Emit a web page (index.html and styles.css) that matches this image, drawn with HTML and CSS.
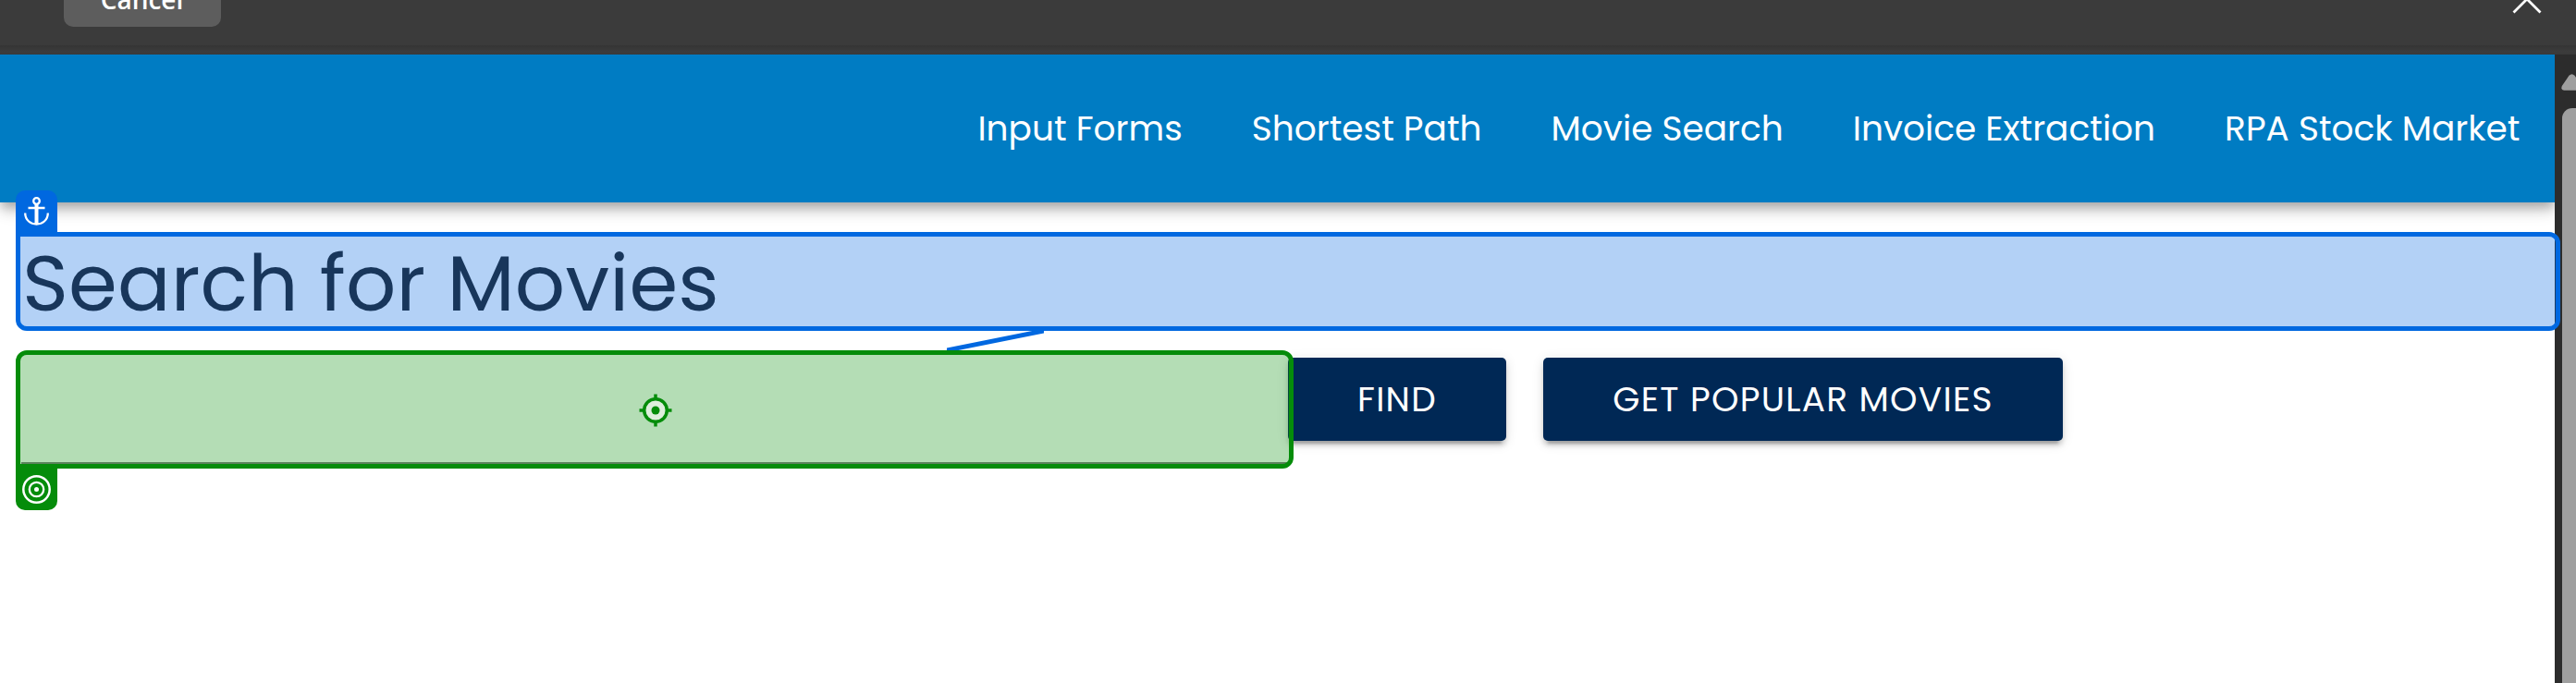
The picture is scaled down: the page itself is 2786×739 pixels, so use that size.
FILE: index.html
```html
<!DOCTYPE html>
<html lang="en">
<head>
<meta charset="utf-8">
<title>Movie Search</title>
<link rel="stylesheet" href="styles.css">
</head>
<body>
<div class="screen">
  <header class="toolbar">
    <button class="cancel">Cancel</button>
    <svg class="close" width="32" height="32" viewBox="0 0 32 32"><path d="M1.5 1.5 30.5 30.5M30.5 1.5 1.5 30.5"/></svg>
  </header>
  <div class="browser">
    <div class="page">
      <nav class="nav">
        <a>Input Forms</a>
        <a>Shortest Path</a>
        <a>Movie Search</a>
        <a>Invoice Extraction</a>
        <a>RPA Stock Market</a>
      </nav>
      <main class="content">
        <h1 class="title">Search for Movies</h1>
        <div class="row">
          <div class="field"></div>
          <button class="btn find">FIND</button>
          <button class="btn popular">GET POPULAR MOVIES</button>
        </div>
      </main>
    </div>
    <div class="scrollbar">
      <svg class="up" width="16" height="18" viewBox="0 0 16 18"><path d="M8.500 1.800Q11.500 -1.300 14.500 1.800L23 13Q24 17.500 20 17.700H3Q-1 17 1 12.800Z"/></svg>
      <div class="thumb"></div>
    </div>
  </div>
  <svg class="link" width="105" height="24" viewBox="0 0 105 24"><path d="M-5 22 110 -1"/></svg>
  <div class="mark anchor">
    <div class="badge"><svg width="45" height="45" viewBox="0 0 45 45"><circle cx="22.500" cy="11.500" r="3.300" stroke-width="2.300"/><path d="M22.500 15V36" stroke-width="4"/><path d="M13.500 19H31.500M10.200 24.500C10.200 40.500 34.800 40.500 34.800 24.500" stroke-width="2.300"/></svg></div>
  </div>
  <div class="mark target">
    <svg class="cross" width="36" height="36" viewBox="0 0 36 36"><circle cx="18" cy="18" r="12.300"/><path d="M18 .5V5M18 31V35.500M.5 18H5M31 18H35.500"/><circle class="dot" cx="18" cy="18" r="4.500"/></svg>
    <div class="badge"><svg width="45" height="45" viewBox="0 0 45 45"><circle cx="22.500" cy="22.500" r="14.200" stroke-width="2.500"/><circle cx="22.500" cy="22.500" r="7.700" stroke-width="2.300"/><circle class="core" cx="22.500" cy="22.500" r="2.500"/></svg></div>
  </div>
</div>
</body>
</html>
```
FILE: styles.css
```css
* { box-sizing: border-box; }
body { margin: 0; background: #fff; font-family: Poppins, Inter, sans-serif; }
.screen { position: relative; width: 2786px; height: 739px; overflow: hidden; display: flex; flex-direction: column; }
button { border: 0; color: #fff; white-space: nowrap; }

.toolbar {
  flex: none; height: 59px; padding: 0 37px 0 69px;
  display: flex; justify-content: space-between; align-items: flex-start;
  background: linear-gradient(#3b3b3b 49px, #343434 49px, #3c3c3c 56px, #393939 59px);
}
.cancel {
  width: 170px; height: 64px; margin-top: -35px; padding: 3px 1px 0 0;
  border-radius: 10px; background: #5d5d5d;
  font: 600 28px/1 "Open Sans", "Noto Sans", sans-serif;
}
.close { margin-top: -17px; fill: none; stroke: #fff; stroke-width: 2.800; }

.browser { flex: 1; display: flex; min-height: 0; }
.page { width: 2763px; overflow: hidden; background: #fff; }
.nav {
  height: 160px; padding-right: 37.500px;
  display: flex; justify-content: flex-end; align-items: center; gap: 75px;
  background: #007cc3; color: #fff; font-size: 37.500px; line-height: 56px; white-space: nowrap;
  box-shadow: 0 5px 10px -2.500px rgba(0,0,0,.2), 0 10px 12.500px rgba(0,0,0,.14), 0 2.500px 25px rgba(0,0,0,.12);
}

.content { padding: 39px 0 0 24px; }
.title { margin: 0; height: 97px; font-weight: 400; font-size: 85px; line-height: 97px; letter-spacing: .2px; color: rgba(0,0,0,.87); white-space: nowrap; }
.row { display: flex; align-items: flex-start; padding-top: 32px; margin-left: -1px; }
.field { width: 1370px; height: 115px; border-bottom: 2px solid rgba(0,0,0,.5); }
.btn {
  height: 90px; padding: 0; border-radius: 5px; background: #002855;
  font: 400 37.500px/90px Poppins, Inter, sans-serif; letter-spacing: 1.250px;
  box-shadow: 0 7.500px 2.500px -5px rgba(0,0,0,.2), 0 5px 5px rgba(0,0,0,.14), 0 2.500px 12.500px rgba(0,0,0,.12);
}
.find { width: 236px; }
.popular { width: 562px; margin-left: 40px; }

.scrollbar { width: 23px; background: #2c2c2c; display: flex; flex-direction: column; align-items: flex-end; padding-top: 21px; overflow: hidden; }
.up { flex: none; fill: #9f9f9f; }
.thumb { flex: 1; width: 15px; margin-top: 19px; border-radius: 11px 0 0 0; background: #9f9f9f; }

.link { position: absolute; left: 1024px; top: 358px; fill: none; stroke: #0068e0; stroke-width: 5; }
.mark { position: absolute; left: 17px; border: 5px solid; }
.anchor { top: 251px; width: 2752px; height: 107px; border-color: #0068e0; border-radius: 0 12px 12px 12px; background: rgba(2,104,224,.3); background-clip: padding-box; }
.target { top: 379px; width: 1382px; height: 128px; border-color: #058c0a; border-radius: 12px 12px 12px 0; background: rgba(5,142,10,.3); background-clip: padding-box; }
.badge { position: absolute; left: -5px; width: 45px; height: 45px; }
.badge svg { display: block; fill: none; stroke: #fff; }
.anchor .badge { top: -50px; border-radius: 10px 10px 0 0; background: #0068e0; }
.target .badge { bottom: -50px; border-radius: 0 0 10px 10px; background: #058c0a; }
.badge .core { fill: #fff; stroke: none; }
.cross { position: absolute; left: 668.500px; top: 41.500px; fill: #deeedd; stroke: #058c0a; stroke-width: 3.500; }
.cross .dot { fill: #058c0a; stroke: none; }
```
